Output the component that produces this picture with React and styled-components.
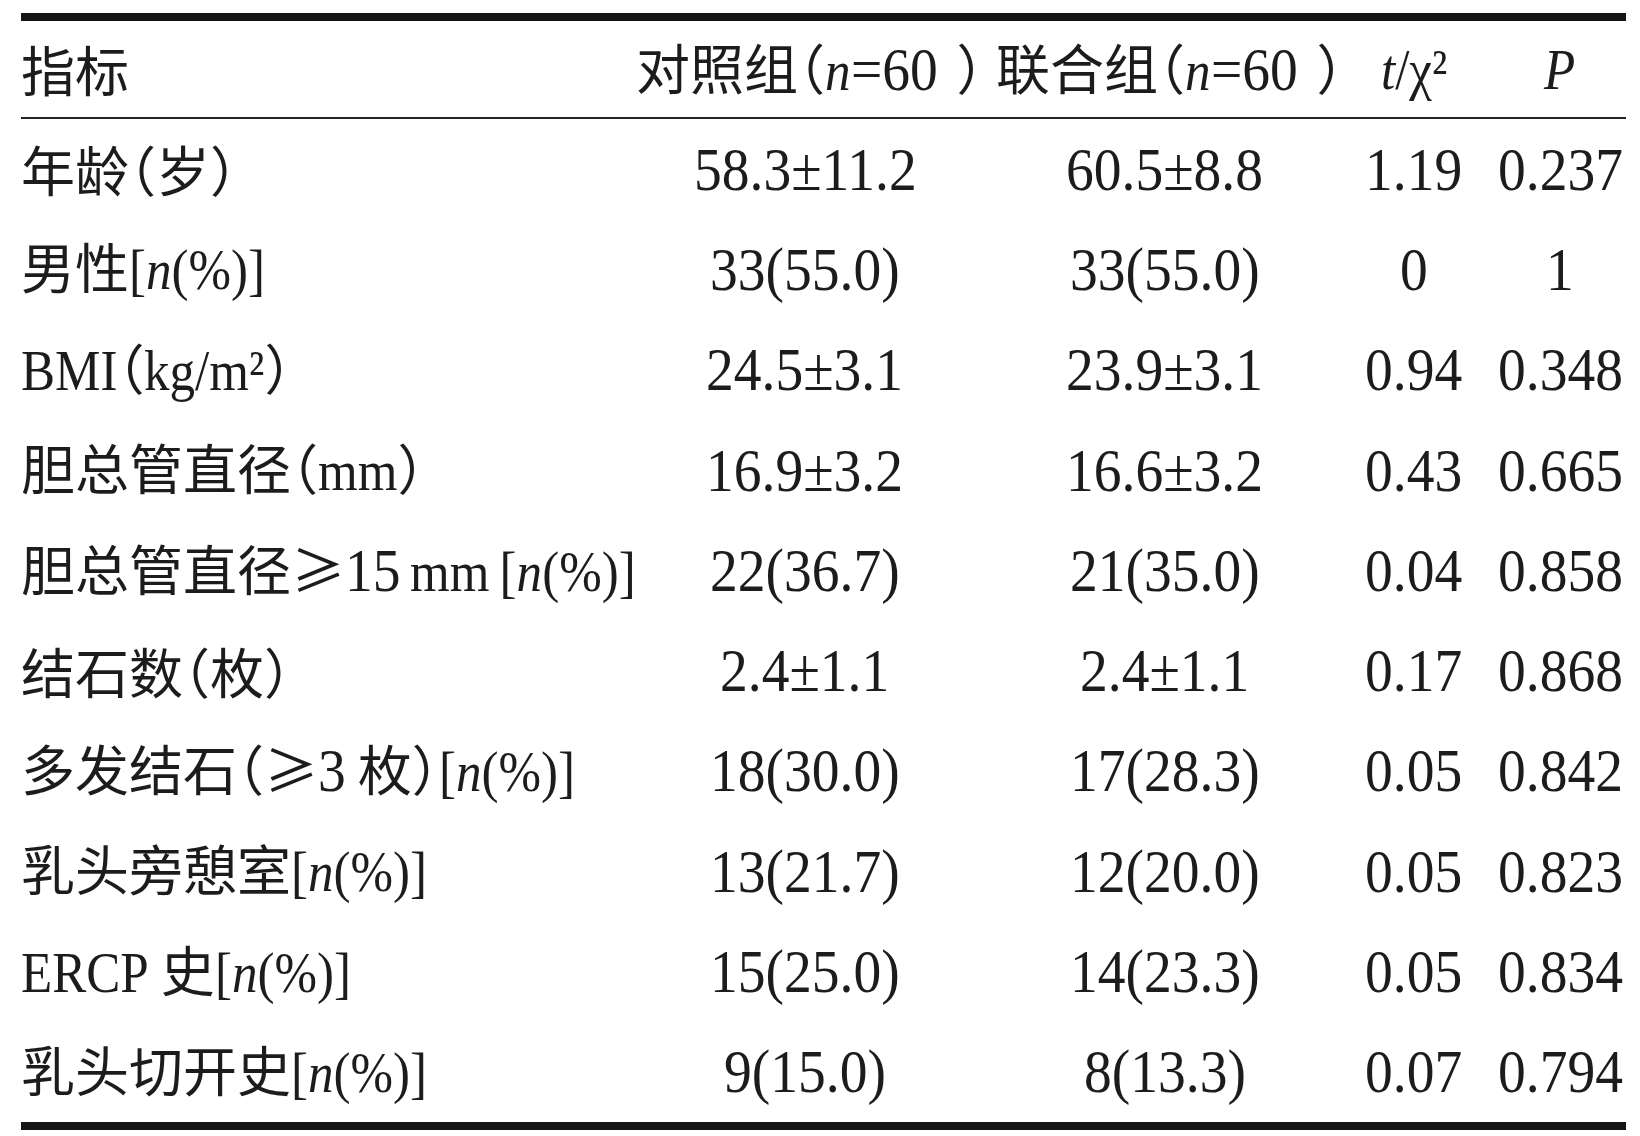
import React, { useLayoutEffect, useRef, useState } from "react";
import styled, { createGlobalStyle } from "styled-components";

const GlobalStyle = createGlobalStyle`
  html, body {
    margin: 0;
    padding: 0;
    background: #fff;
  }
  body {
    font-family: "Noto Sans CJK SC", "Noto Sans", sans-serif;
    color: #1d1b1c;
  }
`;

const COLS = "593px 382px 338px 160px 132px";

const Table = styled.div`
  margin: 13px 0 0 21px;
  width: 1605px;
  border-top: 8px solid #151515;
  border-bottom: 8px solid #151515;
`;

const HeadRow = styled.div`
  display: grid;
  grid-template-columns: ${COLS};
  align-items: center;
  height: 96px;
  border-bottom: 2px solid #222;
`;

const Row = styled.div`
  display: grid;
  grid-template-columns: ${COLS};
  align-items: center;
  height: 100.3px;
`;

const Cell = styled.div`
  font-size: 54px;
  line-height: 1;
  white-space: nowrap;
  font-feature-settings: "halt";
  text-align: ${(p) => (p.$left ? "left" : "center")};
`;

// group headers sit left in their column, each with its own indent
const GroupCell = styled(Cell)`
  text-align: left;
  padding-left: ${(p) => p.$pad}px;
`;

const CloseParen = styled.span`
  margin-left: 19px;
`;

const Unit = styled.span`
  margin-left: 9px;
`;

// the source sets latin in a narrow Times; letters and figures get
// a slightly different squeeze
const LatBox = styled.span`
  display: inline-block;
  font-family: "Liberation Serif", "Times New Roman", serif;
  font-size: ${(p) => (p.$num ? 61 : 58)}px;
  transform: scaleX(${(p) => p.$sx});
  transform-origin: left center;
`;

const It = styled.i`
  font-style: italic;
`;

function Lat({ children, num }) {
  const ref = useRef(null);
  const [w, setW] = useState(0);
  const sx = num ? 0.91 : 0.88;

  useLayoutEffect(() => {
    const measure = () => {
      if (ref.current) setW(ref.current.offsetWidth);
    };
    measure();
    if (document.fonts) document.fonts.ready.then(measure);
  }, []);

  return (
    <LatBox ref={ref} $num={num} $sx={sx} style={{ marginRight: -w * (1 - sx) }}>
      {children}
    </LatBox>
  );
}

const Num = ({ children }) => <Lat num>{children}</Lat>;

const NPct = () => (
  <Lat>
    [<It>n</It>(%)]
  </Lat>
);

const rows = [
  { label: <>年龄（岁）</>, a: "58.3±11.2", b: "60.5±8.8", t: "1.19", p: "0.237" },
  { label: <>男性<NPct /></>, a: "33(55.0)", b: "33(55.0)", t: "0", p: "1" },
  {
    label: <><Lat>BMI</Lat>（<Lat>kg/m²</Lat>）</>,
    a: "24.5±3.1", b: "23.9±3.1", t: "0.94", p: "0.348",
  },
  { label: <>胆总管直径（<Lat>mm</Lat>）</>, a: "16.9±3.2", b: "16.6±3.2", t: "0.43", p: "0.665" },
  {
    label: (
      <>
        胆总管直径≥<Num>15</Num>
        <Unit><Lat>{"mm\u2009["}<It>n</It>(%)]</Lat></Unit>
      </>
    ),
    a: "22(36.7)", b: "21(35.0)", t: "0.04", p: "0.858",
  },
  { label: <>结石数（枚）</>, a: "2.4±1.1", b: "2.4±1.1", t: "0.17", p: "0.868" },
  {
    label: <>多发结石（≥<Num>3</Num> 枚）<NPct /></>,
    a: "18(30.0)", b: "17(28.3)", t: "0.05", p: "0.842",
  },
  { label: <>乳头旁憩室<NPct /></>, a: "13(21.7)", b: "12(20.0)", t: "0.05", p: "0.823" },
  { label: <><Lat>ERCP</Lat> 史<NPct /></>, a: "15(25.0)", b: "14(23.3)", t: "0.05", p: "0.834" },
  { label: <>乳头切开史<NPct /></>, a: "9(15.0)", b: "8(13.3)", t: "0.07", p: "0.794" },
];

const GroupHead = ({ name, pad }) => (
  <GroupCell $pad={pad}>
    {name}（<Lat><It>n</It></Lat><Num>=60</Num><CloseParen>）</CloseParen>
  </GroupCell>
);

export default function App() {
  return (
    <>
      <GlobalStyle />
      <Table>
        <HeadRow>
          <Cell $left>指标</Cell>
          <GroupHead name="对照组" pad={22} />
          <GroupHead name="联合组" pad={0} />
          <Cell>
            <Lat><It>t</It>/χ²</Lat>
          </Cell>
          <Cell>
            <Lat><It>P</It></Lat>
          </Cell>
        </HeadRow>
        {rows.map((r, i) => (
          <Row key={i}>
            <Cell $left>{r.label}</Cell>
            <Cell><Num>{r.a}</Num></Cell>
            <Cell><Num>{r.b}</Num></Cell>
            <Cell><Num>{r.t}</Num></Cell>
            <Cell><Num>{r.p}</Num></Cell>
          </Row>
        ))}
      </Table>
    </>
  );
}
